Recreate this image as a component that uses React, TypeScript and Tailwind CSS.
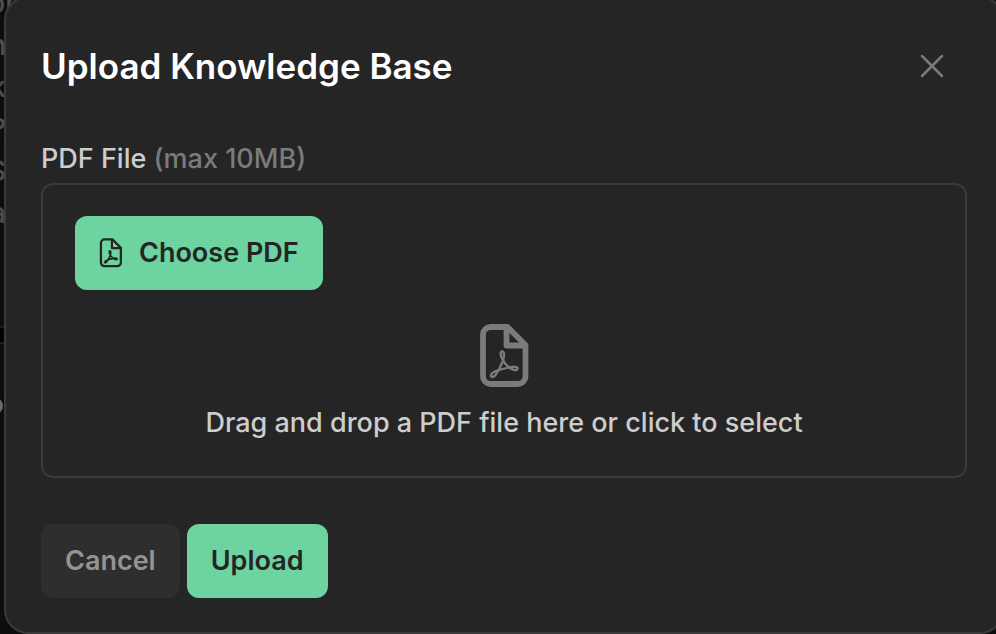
import React, { useRef } from "react";

const backdropLines = ["in", "ask", "(?", "S", "a"];

// Dimmed page behind the dialog, only its left edge shows
function Backdrop() {
  return (
    <div
      aria-hidden="true"
      className="col-start-1 row-start-1 min-w-0 overflow-hidden bg-[#0d0d0d] text-[28px] leading-[42px] font-medium text-[#4d4d4d]"
    >
      <div className="-mt-[18px] flex h-[344px] flex-col">
        <span className="flex w-4 justify-end whitespace-nowrap">For</span>
        {backdropLines.map((line) => (
          <span key={line} className="flex w-1.5 justify-end whitespace-nowrap">
            {line}
          </span>
        ))}
      </div>
      <div className="h-[18px] border-y-2 border-[#1c1c1c] bg-black" />
      <div className="mt-[54px] -ml-[13px] size-4 rounded-full bg-[#6b6b6b]" />
    </div>
  );
}

function PdfIcon({ className, line, mark }: { className: string; line: number; mark: number }) {
  return (
    <svg
      viewBox="0 0 49 64"
      className={className}
      fill="none"
      stroke="currentColor"
      strokeLinecap="round"
      strokeLinejoin="round"
      aria-hidden="true"
    >
      <g strokeWidth={line}>
        <path d="M27.5 3H10.5A7.5 7.5 0 0 0 3 10.5V52.5A7.5 7.5 0 0 0 10.5 60H38A7.5 7.5 0 0 0 45.5 52.5V21Z" />
        <path d="M26.5 3.5V21.5H45" />
      </g>
      <path
        strokeWidth={mark}
        d="M22.3 27.5C24.8 27.5 24.3 33 22.6 37.5C21 42 18 47.5 15.5 51C13.5 53.8 10.5 53.5 11 51C11.6 49 14 47.5 18 46.3C22 45 28 43.7 32 43C36 42.4 38 43.3 37.5 45C37 47 33.5 46.3 30.5 44.5C26.5 42 24 38.5 22 34.5C20.3 31 20 27.5 22.3 27.5Z"
      />
    </svg>
  );
}

function UploadDialog() {
  const fileInput = useRef<HTMLInputElement>(null);

  return (
    <div
      role="dialog"
      aria-labelledby="dialog-title"
      className="col-start-1 row-start-1 -mt-1 ml-1 -mr-2 min-w-0 rounded-3xl border-2 border-[#3a3a3a] bg-[#252525] px-[35px] pt-11 pb-[34px]"
    >
      <div className="flex items-center justify-between pr-[19px]">
        <h2 id="dialog-title" className="text-[35px] leading-[48px] font-semibold text-white">
          Upload Knowledge Base
        </h2>
        <button type="button" aria-label="Close" className="flex size-8 items-center justify-center text-[#7b7b7b]">
          <svg viewBox="0 0 24 24" className="size-6" fill="none" stroke="currentColor" strokeWidth="2.5" strokeLinecap="round">
            <path d="M2 2 22 22M22 2 2 22" />
          </svg>
        </button>
      </div>

      <form className="mt-[50px]" onSubmit={(e) => e.preventDefault()}>
        <label htmlFor="pdf-file" className="block text-[27px] leading-[38px] font-medium text-[#cdcdcd]">
          PDF File <span className="text-[#7b7b7b]">(max 10MB)</span>
        </label>
        <input ref={fileInput} id="pdf-file" type="file" accept="application/pdf" className="hidden" />
        <div className="mt-[5px] rounded-xl border-2 border-[#3a3a3a] px-8 pt-[31px] pb-[33px]">
          <button
            type="button"
            onClick={() => fileInput.current?.click()}
            className="flex h-[74px] items-center gap-4 rounded-xl bg-[#6dd3a0] px-6 text-[27px] font-semibold text-[#252525]"
          >
            <PdfIcon className="h-[30px] w-6" line={4.8} mark={3.4} />
            Choose PDF
          </button>
          <div className="mt-[34px] flex flex-col items-center">
            <PdfIcon className="h-16 w-[49px] text-[#7b7b7b]" line={5.8} mark={2.4} />
            <p className="mt-[15px] text-center text-[27px] leading-10 font-medium text-[#cdcdcd]">
              Drag and drop a PDF file here or click to select
            </p>
          </div>
        </div>
        <div className="mt-[46px] flex gap-[7px] text-[27px] font-semibold">
          <button type="button" className="h-[74px] rounded-xl bg-[#2e2e2e] px-6 text-[#949494]">
            Cancel
          </button>
          <button type="submit" className="h-[74px] rounded-xl bg-[#6dd3a0] px-6 text-[#252525]">
            Upload
          </button>
        </div>
      </form>
    </div>
  );
}

export default function App() {
  return (
    <main className="grid min-h-screen grid-cols-1 items-start overflow-hidden bg-[#0d0d0d] font-['Inter',sans-serif]">
      <Backdrop />
      <UploadDialog />
    </main>
  );
}
